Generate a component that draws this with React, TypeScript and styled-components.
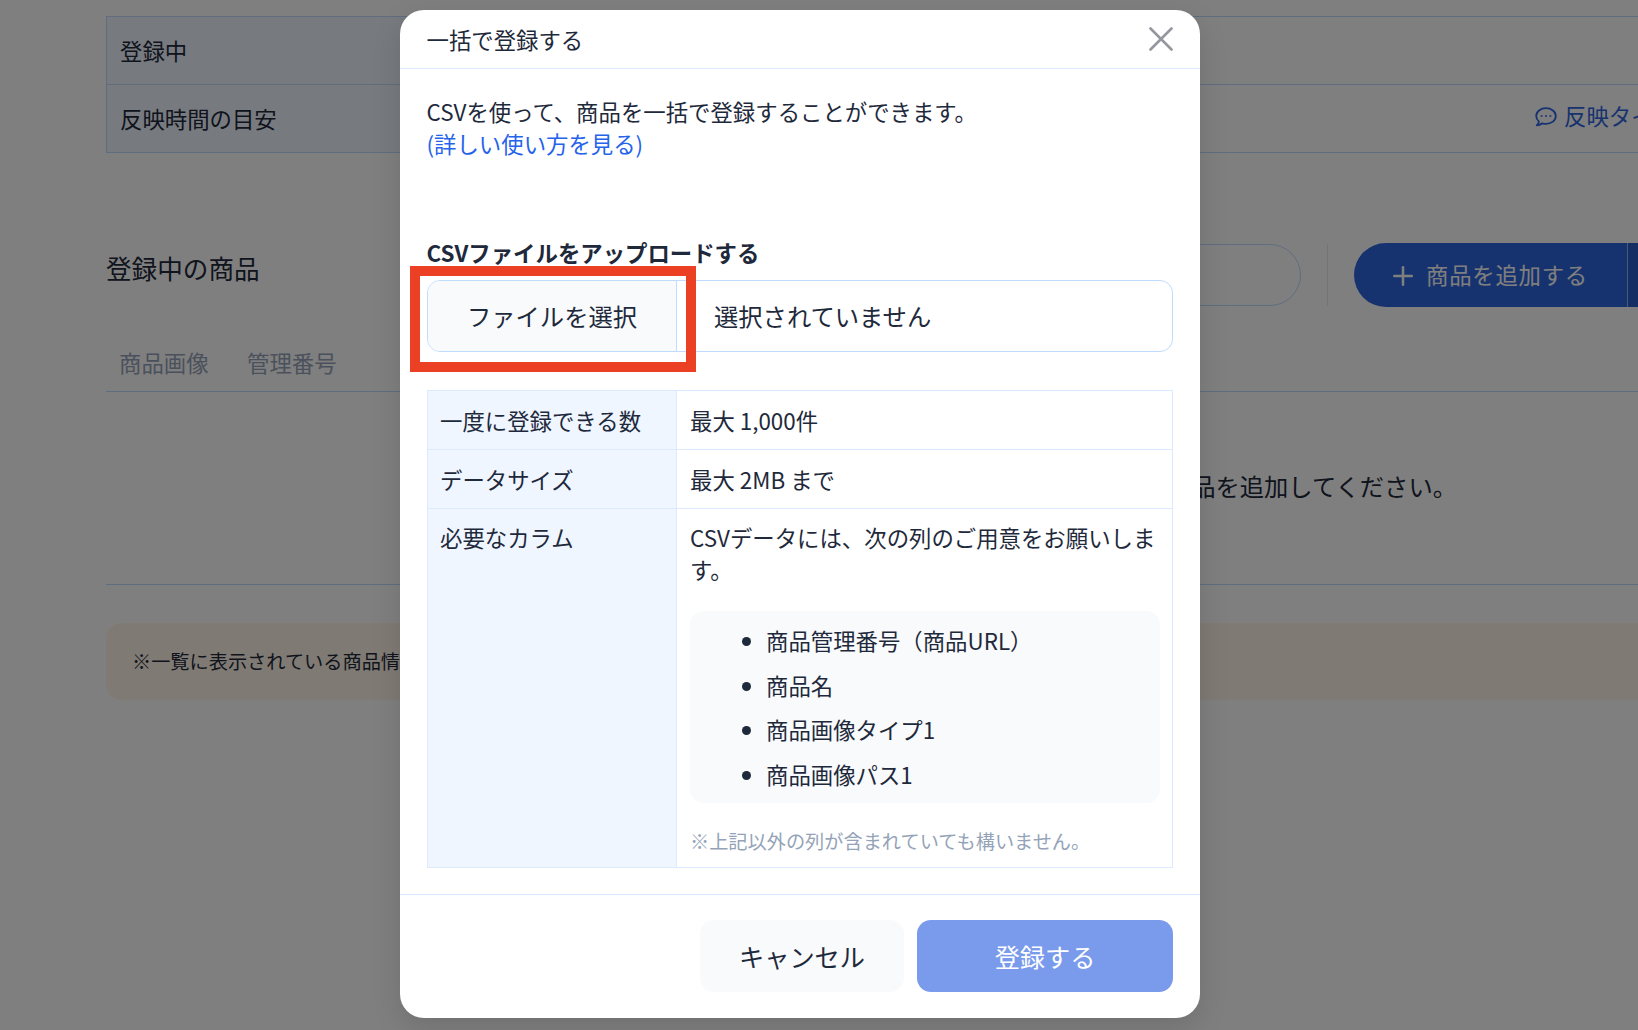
import React from "react";
import styled, { createGlobalStyle } from "styled-components";
import { Plus } from "lucide-react";

const border = `#bfdbfe`;
const text = `#1e293b`;
const soft = `#f8fafc`;

const GlobalStyle = createGlobalStyle`
  html, body {
    margin: 0;
    padding: 0;
    background: #fff;
  }
  * {
    box-sizing: border-box;
  }
  body {
    font-family: "Noto Sans CJK JP", "Noto Sans", sans-serif;
    font-size: 22.4px;
    line-height: 32px;
    color: ${text};
  }
`;

const Page = styled.div`
  width: 1638px;
  height: 1030px;
  overflow: hidden;
  position: relative;
`;
const Content = styled.main`
  width: 1582px;
  margin-left: 106px;
  padding-top: 16px;
`;
const InfoTable = styled.section`
  border: 1px solid ${border};
  border-right: 0;
`;
const InfoRow = styled.div`
  display: grid;
  grid-template-columns: 300px 1128px 1fr;
  height: 67px;
  align-items: center;
  & + & {
    height: 68px;
    border-top: 1px solid ${border};
  }
`;
const InfoLabel = styled.div`
  height: 100%;
  display: flex;
  align-items: center;
  padding: 0 0 1px 13px;
  background: #eff6ff;
`;
const InfoLink = styled.a`
  display: flex;
  align-items: center;
  gap: 7px;
  padding-bottom: 7px;
  color: #2e66de;
  white-space: nowrap;
`;
const ChatIcon = styled.svg`
  width: 22px;
  height: 20px;
  flex-shrink: 0;
  margin-top: 3px;
  fill: none;
  stroke: currentColor;
  stroke-width: 1.8;
  stroke-linejoin: round;
`;
const SectionBar = styled.section`
  display: flex;
  align-items: center;
  margin-top: 90px;
`;
const SectionTitle = styled.h2`
  flex: 1;
  margin: 0;
  padding-bottom: 15px;
  font-size: 25.6px;
  font-weight: 400;
`;
const SearchPill = styled.div`
  width: 400px;
  height: 62px;
  border: 1px solid ${border};
  border-radius: 31px;
`;
const Divider = styled.div`
  width: 1px;
  height: 62px;
  margin: 0 26px;
  background: #e2e8f0;
`;
const AddGroup = styled.div`
  display: flex;
  height: 64px;
  color: #fff;
`;
const AddButton = styled.div`
  width: 274px;
  display: flex;
  align-items: center;
  gap: 8.5px;
  padding: 0 0 3px 33.5px;
  background: #2e66de;
  border-radius: 32px 0 0 32px;
  border-right: 1px solid #93b4f5;
  letter-spacing: 0.75px;
  svg {
    margin-top: 5px;
    flex-shrink: 0;
  }
`;
const AddMore = styled.div`
  width: 60px;
  background: #2a5cc8;
`;
const ListHead = styled.div`
  display: flex;
  gap: 38.5px;
  align-items: center;
  height: 57px;
  margin-top: 28px;
  padding: 0 0 2px 13px;
  border-bottom: 1px solid ${border};
  color: #94a3b8;
`;
const EmptyRow = styled.div`
  height: 193px;
  display: flex;
  align-items: center;
  justify-content: flex-end;
  padding: 0 231px 4px 0;
  border-bottom: 1px solid ${border};
  font-size: 24.3px;
`;
const Notice = styled.div`
  height: 77px;
  margin-top: 38px;
  display: flex;
  align-items: center;
  padding: 0 0 2px 26px;
  border-radius: 16px;
  background: #fff5e6;
  font-size: 19.2px;
`;

const Backdrop = styled.div`
  position: absolute;
  inset: 0;
  padding: 10px 0 0 400px;
  background: rgba(0, 0, 0, 0.5);
`;
const Modal = styled.div`
  width: 800px;
  height: 1008px;
  display: flex;
  flex-direction: column;
  background: #fff;
  border-radius: 24px;
  box-shadow: 0 10px 30px rgba(0, 0, 0, 0.12);
`;
const ModalHead = styled.header`
  height: 59px;
  flex-shrink: 0;
  display: flex;
  align-items: center;
  justify-content: space-between;
  padding: 0 27px 0 26.5px;
  border-bottom: 1px solid #dbeafe;
`;
const ModalTitle = styled.h1`
  margin: 0;
  font-size: 22.4px;
  font-weight: 400;
`;
const CloseIcon = styled.svg`
  width: 24px;
  height: 24px;
  stroke: #94979e;
  stroke-width: 2.6;
  stroke-linecap: round;
  fill: none;
`;
const ModalBody = styled.div`
  flex: 1;
  padding: 26px 27px 0;
`;
const Intro = styled.p`
  margin: 0 0 0 -0.5px;
`;
const GuideLink = styled.a`
  color: #2563eb;
`;
const UploadLabel = styled.div`
  margin: 77px 0 0 -0.5px;
  font-weight: 700;
`;
const FileField = styled.div`
  position: relative;
  display: flex;
  align-items: center;
  height: 72px;
  margin-top: 12px;
  border: 1px solid ${border};
  border-radius: 13px;
  font-size: 24.3px;
`;
const FileButton = styled.div`
  width: 249px;
  height: 100%;
  display: flex;
  align-items: center;
  justify-content: center;
  padding-bottom: 1px;
  background: ${soft};
  border-right: 1px solid ${border};
  border-radius: 12px 0 0 12px;
`;
const FileName = styled.div`
  padding: 0 0 1px 37px;
`;
const Highlight = styled.div`
  position: absolute;
  left: -18px;
  top: -15px;
  width: 286px;
  height: 106px;
  border: 10px solid #ec4024;
`;
const SpecTable = styled.table`
  width: 746px;
  margin-top: 38px;
  border-collapse: collapse;
  table-layout: fixed;
  th,
  td {
    padding: 13px 12px 13px 13px;
    border: 1px solid #dbeafe;
    text-align: left;
    vertical-align: top;
    font-weight: 400;
  }
  th {
    width: 249px;
    padding-left: 12px;
    background: #eff6ff;
  }
  tr:last-child th {
    padding-top: 12px;
  }
`;
const SpecNote = styled.p`
  margin: -1px 0 0;
`;
const ColumnList = styled.ul`
  margin: 26px 0 0;
  padding: 13px 0 13px 76px;
  height: 192px;
  border-radius: 14px;
  background: ${soft};
  li {
    margin-bottom: 12.7px;
  }
`;
const SmallNote = styled.p`
  margin: 22px 0 -3px;
  font-size: 19.2px;
  color: #94a3b8;
`;
const ModalFoot = styled.footer`
  display: flex;
  justify-content: flex-end;
  gap: 13px;
  height: 124px;
  padding: 25px 27px 26px;
  border-top: 1px solid #dbeafe;
  font-size: 25.2px;
`;
const FootButton = styled.button<{ $primary?: boolean }>`
  width: ${(p) => (p.$primary ? "256px" : "204px")};
  border: 0;
  border-radius: 14px;
  font: inherit;
  color: ${(p) => (p.$primary ? "#fff" : text)};
  background: ${(p) => (p.$primary ? "#7a9bec" : soft)};
`;

export default function App() {
  return (
    <Page>
      <GlobalStyle />
      <Content>
        <InfoTable>
          <InfoRow>
            <InfoLabel>登録中</InfoLabel>
          </InfoRow>
          <InfoRow>
            <InfoLabel>反映時間の目安</InfoLabel>
            <div />
            <InfoLink>
              <ChatIcon viewBox="0 0 22 20">
                <path d="M11 1.2C5.6 1.2 1.2 4.7 1.2 9c0 2.1 1 4 2.7 5.4-.1 1.5-.9 3-2.2 4 2.2-.1 4.2-.9 5.6-2.1 1.2.4 2.4.6 3.7.6 5.4 0 9.8-3.5 9.8-7.9S16.4 1.2 11 1.2z" />
                <path d="M6.6 8.2v1.6M11 8.2v1.6M15.4 8.2v1.6" strokeWidth="1.9" />
              </ChatIcon>
              反映タイミング
            </InfoLink>
          </InfoRow>
        </InfoTable>
        <SectionBar>
          <SectionTitle>登録中の商品</SectionTitle>
          <SearchPill />
          <Divider />
          <AddGroup>
            <AddButton>
              <Plus size={30} strokeWidth={2} />
              商品を追加する
            </AddButton>
            <AddMore />
          </AddGroup>
        </SectionBar>
        <ListHead>
          <span>商品画像</span>
          <span>管理番号</span>
        </ListHead>
        <EmptyRow>商品を追加してください。</EmptyRow>
        <Notice>※一覧に表示されている商品情報</Notice>
      </Content>
      <Backdrop>
        <Modal>
          <ModalHead>
            <ModalTitle>一括で登録する</ModalTitle>
            <CloseIcon viewBox="0 0 24 24">
              <path d="M1.5 1.5 22.5 22.5M22.5 1.5 1.5 22.5" />
            </CloseIcon>
          </ModalHead>
          <ModalBody>
            <Intro>
              CSVを使って、商品を一括で登録することができます。
              <br />
              <GuideLink>(詳しい使い方を見る)</GuideLink>
            </Intro>
            <UploadLabel>CSVファイルをアップロードする</UploadLabel>
            <FileField>
              <FileButton>ファイルを選択</FileButton>
              <FileName>選択されていません</FileName>
              <Highlight />
            </FileField>
            <SpecTable>
              <tbody>
                <tr>
                  <th>一度に登録できる数</th>
                  <td>最大 1,000件</td>
                </tr>
                <tr>
                  <th>データサイズ</th>
                  <td>最大 2MB まで</td>
                </tr>
                <tr>
                  <th>必要なカラム</th>
                  <td>
                    <SpecNote>CSVデータには、次の列のご用意をお願いします。</SpecNote>
                    <ColumnList>
                      <li>商品管理番号（商品URL）</li>
                      <li>商品名</li>
                      <li>商品画像タイプ1</li>
                      <li>商品画像パス1</li>
                    </ColumnList>
                    <SmallNote>※上記以外の列が含まれていても構いません。</SmallNote>
                  </td>
                </tr>
              </tbody>
            </SpecTable>
          </ModalBody>
          <ModalFoot>
            <FootButton>キャンセル</FootButton>
            <FootButton $primary>登録する</FootButton>
          </ModalFoot>
        </Modal>
      </Backdrop>
    </Page>
  );
}
